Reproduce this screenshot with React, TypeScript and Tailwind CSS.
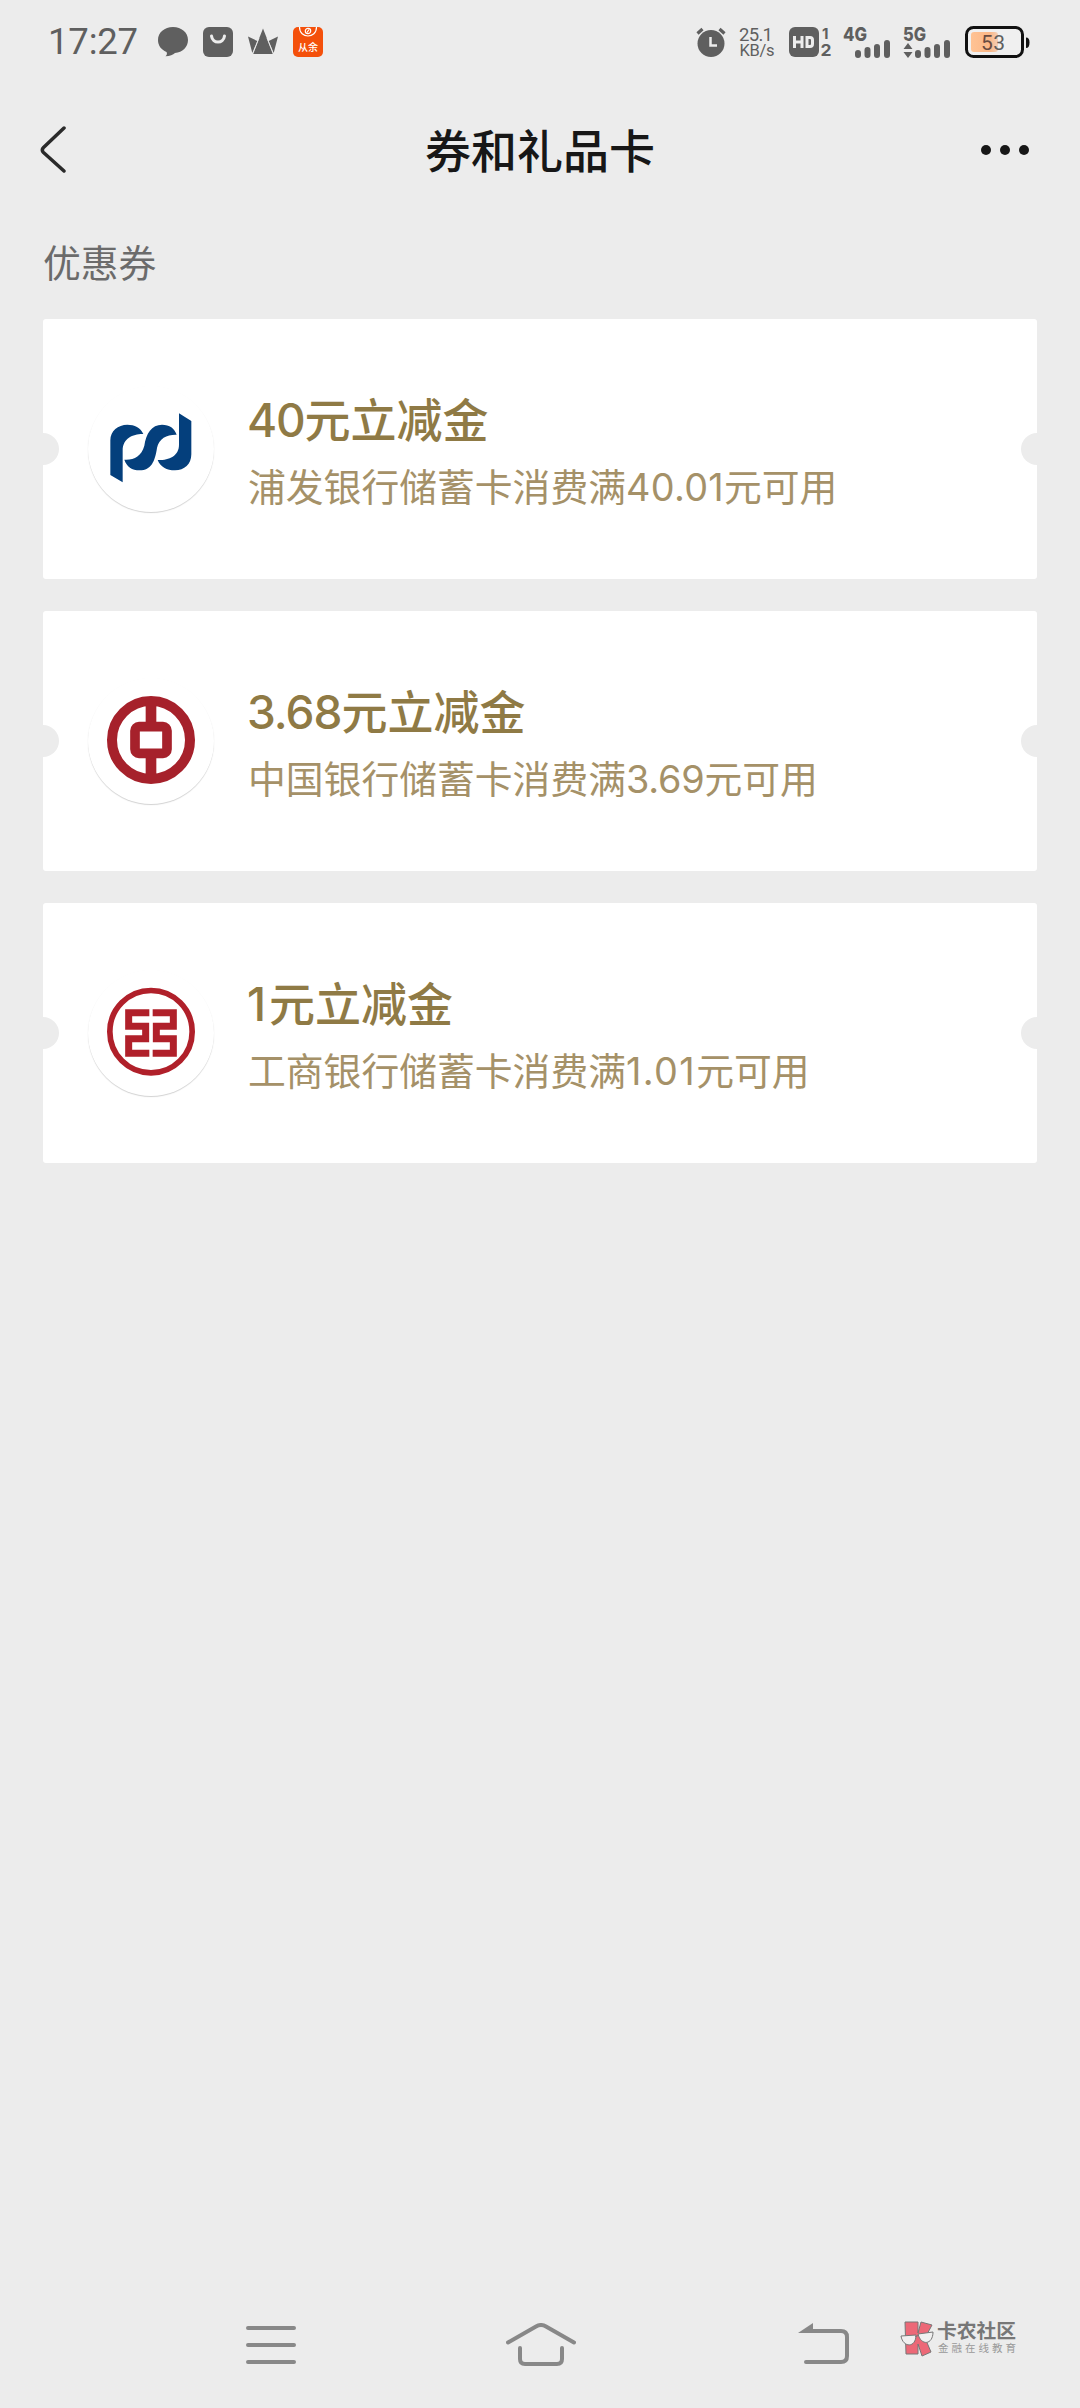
import type { ReactNode } from "react";

interface Coupon {
  id: string;
  amount: string;
  amountClass: string;
  bank: string;
  threshold: string;
  thresholdClass: string;
  logo: ReactNode;
}

function SpdbLogo() {
  return (
    <svg viewBox="145 229 378 378" className="size-[126px]" fill="#043f7c">
      <path d="M212 496V392C212 364 235 345 263 345C285 345 302 353 311 373C282 372 249 385 249 422V518Z" />
      <path d="M254 450C282 452 305 440 314 408C319 372 336 345 367 345C390 345 404 355 411 375C383 374 358 385 352 415C346 455 335 482 300 482C277 482 261 471 254 450Z" />
      <path d="M418 311L455 334V434C455 464 434 482 406 482C381 482 362 472 354 451C386 452 418 440 418 405Z" />
    </svg>
  );
}

function BocLogo() {
  return (
    <svg viewBox="24 -3 378 378" className="size-[126px]" fill="none" stroke="#a6212b">
      <circle cx="213" cy="183" r="117" strokeWidth="30" />
      <path d="M213 55V145M213 222V310" strokeWidth="32" />
      <rect x="165" y="143" width="96" height="80" rx="12" strokeWidth="29" />
    </svg>
  );
}

function IcbcLogo() {
  return (
    <svg viewBox="24 3 378 378" className="size-[126px]" fill="none" stroke="#b0202a">
      <circle cx="213" cy="188" r="123.500" strokeWidth="17" />
      <path
        d="M208 131.500H146V172H197V209H146V252.500H208M218 131.500H280V172H229V209H280V252.500H218"
        strokeWidth="21"
      />
    </svg>
  );
}

const coupons: Coupon[] = [
  {
    id: "spdb",
    amount: "40",
    amountClass: "tracking-[-1.200px]",
    bank: "浦发银行",
    threshold: "40.01",
    thresholdClass: "tracking-[0.300px]",
    logo: <SpdbLogo />,
  },
  {
    id: "boc",
    amount: "3.68",
    amountClass: "tracking-[-1px]",
    bank: "中国银行",
    threshold: "3.69",
    thresholdClass: "tracking-[-0.200px]",
    logo: <BocLogo />,
  },
  {
    id: "icbc",
    amount: "1",
    amountClass: "tracking-[3px]",
    bank: "工商银行",
    threshold: "1.01",
    thresholdClass: "tracking-[1.400px]",
    logo: <IcbcLogo />,
  },
];

function CouponCard({ coupon }: { coupon: Coupon }) {
  return (
    <li className="relative flex h-[260px] items-center overflow-hidden rounded-[3px] bg-white pl-[45px]">
      <span className="absolute -left-4 top-[114px] size-8 rounded-full bg-[#ececec]" />
      <span className="absolute -right-4 top-[114px] size-8 rounded-full bg-[#ececec]" />
      <div className="size-[126px] shrink-0 rounded-full shadow-[0_1px_1px_rgba(0,0,0,0.18)]">
        {coupon.logo}
      </div>
      <div className="ml-[33px] whitespace-nowrap pt-[6px]">
        <h2 className="text-[46px] font-medium leading-[64px] text-[#8f7a45]">
          <span className={coupon.amountClass}>{coupon.amount}</span>元立减金
        </h2>
        <p className="mt-[5px] pl-px text-[37.800px] leading-[60px] text-[#a59168]">
          {coupon.bank}储蓄卡消费满
          <span className={coupon.thresholdClass}>{coupon.threshold}</span>元可用
        </p>
      </div>
    </li>
  );
}

function SignalBars() {
  return (
    <g stroke="#5f5f5f" strokeWidth="6" strokeLinecap="round">
      <path d="M15 41V43M24.500 38V43M34 35V43M44 31V43" />
    </g>
  );
}

function StatusBar() {
  return (
    <div className="flex h-[84px] items-center pl-12 pr-[50px] text-[#5f5f5f]">
      <span className="w-[110px] pt-px text-[36.500px] font-normal leading-none tracking-[-0.2px] font-[Roboto]">
        17:27
      </span>
      <div className="flex items-center gap-[15px]">
        <svg viewBox="0 0 30 30" className="size-[30px]" fill="#5f5f5f">
          <path d="M15 0C23.500 0 30 5.500 30 13C30 20 24.500 25.500 17 26C15 28 12 29 7.500 29.300C9 28 9.300 26.500 8.500 25C3 22.500 0 18.500 0 13C0 5.500 6.500 0 15 0Z" />
        </svg>
        <svg viewBox="0 0 30 30" className="size-[30px]">
          <rect width="30" height="30" rx="6" fill="#5f5f5f" />
          <path d="M8.500 9C9.500 17 20.500 17 21.500 9" fill="none" stroke="#ececec" strokeWidth="3" strokeLinecap="round" />
        </svg>
        <svg viewBox="0 0 30 30" className="size-[30px]" fill="#5f5f5f">
          <path d="M15 1.500L25 27H5ZM0 9.500L9.300 14L4.300 26ZM30 9.500L20.700 14L25.700 26Z" />
          <path d="M11 11L4.700 27M19 11L25.300 27" stroke="#ececec" strokeWidth="0.800" />
        </svg>
        <svg viewBox="0 0 30 30" className="size-[30px]">
          <rect width="30" height="30" rx="5" fill="#f4500b" />
          <g fill="none" stroke="#fff" strokeWidth="1.200">
            <path d="M6.500 0C6.500 12 23.500 12 23.500 0" />
            <circle cx="15" cy="4" r="2.700" />
            <path d="M14 5.500L16 2.500" />
          </g>
          <text x="5" y="23.500" fill="#fff" fontSize="10" fontWeight="500" textLength="20">
            从余
          </text>
        </svg>
      </div>
      <div className="ml-auto flex items-center">
        <svg viewBox="0 0 30 30" className="size-[30px]">
          <circle cx="15" cy="16.500" r="13.500" fill="#5f5f5f" />
          <path d="M1.500 6.500L6.500 2M28.500 6.500L23.500 2" stroke="#5f5f5f" strokeWidth="3.200" />
          <path d="M14.500 10V18.500H21" fill="none" stroke="#ececec" strokeWidth="2.500" />
        </svg>
        <svg viewBox="0 0 36 32" className="ml-[13px] h-8 w-9 overflow-visible font-[Roboto]" fill="#5f5f5f">
          <text x="0" y="14.500" fontSize="18.500" textLength="34">25.1</text>
          <text x="0.500" y="30" fontSize="16.500" textLength="35">KB/s</text>
        </svg>
        <svg viewBox="0 0 43 30" className="ml-[14px] h-[30px] w-[43px] overflow-visible" fill="#5f5f5f">
          <rect width="30" height="30" rx="6" />
          <path d="M5.500 9V21M13 9V21M5.500 15H13M18 10.500V19.500H21Q23.500 19.500 23.500 17V13Q23.500 10.500 21 10.500Z" fill="none" stroke="#ececec" strokeWidth="3" />
          <text x="33" y="11.500" fontSize="15" fontWeight="700">1</text>
          <text x="31.500" y="29" fontSize="16" fontWeight="700" textLength="11" lengthAdjust="spacingAndGlyphs">2</text>
        </svg>
        <svg viewBox="0 14 48 32" className="ml-[11px] h-8 w-12 overflow-visible" fill="#5f5f5f">
          <text x="0" y="28.500" fontSize="19" fontWeight="800" textLength="24" lengthAdjust="spacingAndGlyphs">4G</text>
          <SignalBars />
        </svg>
        <svg viewBox="0 14 48 32" className="ml-3 h-8 w-12 overflow-visible" fill="#5f5f5f">
          <text x="0" y="28.500" fontSize="19" fontWeight="800" textLength="23" lengthAdjust="spacingAndGlyphs">5G</text>
          <path d="M0.500 37L5 31L9.500 37ZM0.500 40L5 46L9.500 40Z" />
          <SignalBars />
        </svg>
        <svg viewBox="0 0 65 32" className="ml-[14px] h-8 w-[65px]">
          <defs>
            <linearGradient id="charge">
              <stop offset="0" stopColor="#ffc394" />
              <stop offset="0.700" stopColor="#fbb787" />
              <stop offset="1" stopColor="#f3d0b8" />
            </linearGradient>
          </defs>
          <rect x="1.500" y="1.500" width="56" height="29" rx="7" fill="#f0f0f0" stroke="#111" strokeWidth="3" />
          <path d="M61 11.500Q64.500 11.500 64.500 16.500Q64.500 22 61 22Z" fill="#111" />
          <rect x="6" y="6" width="27" height="20" rx="3" fill="url(#charge)" />
          <text x="16" y="23.500" fontSize="21" fill="#694b41" textLength="24" className="font-[Roboto]">
            5<tspan fill="#5f5f5f">3</tspan>
          </text>
        </svg>
      </div>
    </div>
  );
}

function TitleBar() {
  return (
    <header className="grid h-[132px] grid-cols-3 items-center px-10">
      <svg viewBox="0 0 26 48" className="h-12 w-[26px]" fill="none" stroke="#2a2a2a" strokeWidth="3.500" strokeLinecap="round">
        <path d="M24 2L3.500 21.500Q1 24 3.500 26.500L24 45" strokeLinejoin="round" />
      </svg>
      <h1 className="whitespace-nowrap pt-px text-center text-[46px] font-medium leading-[68px] text-[#171717]">
        券和礼品卡
      </h1>
      <div className="flex justify-end gap-[9px] pr-[11px]">
        <span className="size-2.5 rounded-full bg-[#171717]" />
        <span className="size-2.5 rounded-full bg-[#171717]" />
        <span className="size-2.5 rounded-full bg-[#171717]" />
      </div>
    </header>
  );
}

function Watermark() {
  return (
    <div className="flex items-center whitespace-nowrap">
      <svg viewBox="0 0 34 36" className="h-9 w-[34px]" stroke="#777" strokeWidth="1">
        <path d="M5 1H18V12L21 1L32 4L25 17L31 31L22 35L18 23V33H6Z" fill="#ec6877" />
        <path d="M1 15L16 14C16 27 3 27 1 15ZM18 13L33 11C33 24 21 25 18 13ZM15 16L19 14" fill="#f1f0f0" />
      </svg>
      <div className="ml-[3px] w-20">
        <p className="text-[19.800px] font-bold leading-[20px] text-[#777]">卡农社区</p>
        <p className="mt-px pl-px text-[10.500px] leading-[14px] tracking-[3px] text-[#999]">金融在线教育</p>
      </div>
    </div>
  );
}

function NavigationBar() {
  return (
    <nav className="flex h-[126px] items-center pl-[246px]">
      <svg viewBox="0 0 50 44" className="h-11 w-[50px]" stroke="#888" strokeWidth="4" strokeLinecap="round">
        <path d="M2 5H48M2 22H48M2 39H48" />
      </svg>
      <svg viewBox="0 0 70 44" className="ml-[210px] h-11 w-[70px]" fill="none" stroke="#888" strokeWidth="4" strokeLinecap="round">
        <path d="M2 19.500L30 3.500Q35 0.500 40 3.500L68 19.500M14 25V36Q14 41 19 41H51Q56 41 56 36V25" />
      </svg>
      <svg viewBox="0 0 52 44" className="ml-[222px] h-11 w-[52px]" fill="none" stroke="#888" strokeWidth="4" strokeLinecap="round">
        <path d="M8 39H43Q49 39 49 33V14Q49 8 43 8H8" />
        <path d="M0 10L15 0V10Z" fill="#888" stroke="none" />
      </svg>
      <div className="mb-[13px] ml-[50px]">
        <Watermark />
      </div>
    </nav>
  );
}

export default function App() {
  return (
    <div className="flex h-[2408px] w-[1080px] flex-col bg-[#ececec] font-[Inter,'Noto_Sans_CJK_SC',sans-serif]">
      <StatusBar />
      <TitleBar />
      <main className="grow px-[43px]">
        <p className="pt-[17px] text-[37.800px] leading-[60px] text-[#6b6b6b]">优惠券</p>
        <ul className="mt-[26px] flex flex-col gap-8">
          {coupons.map((coupon) => (
            <CouponCard key={coupon.id} coupon={coupon} />
          ))}
        </ul>
      </main>
      <NavigationBar />
    </div>
  );
}
